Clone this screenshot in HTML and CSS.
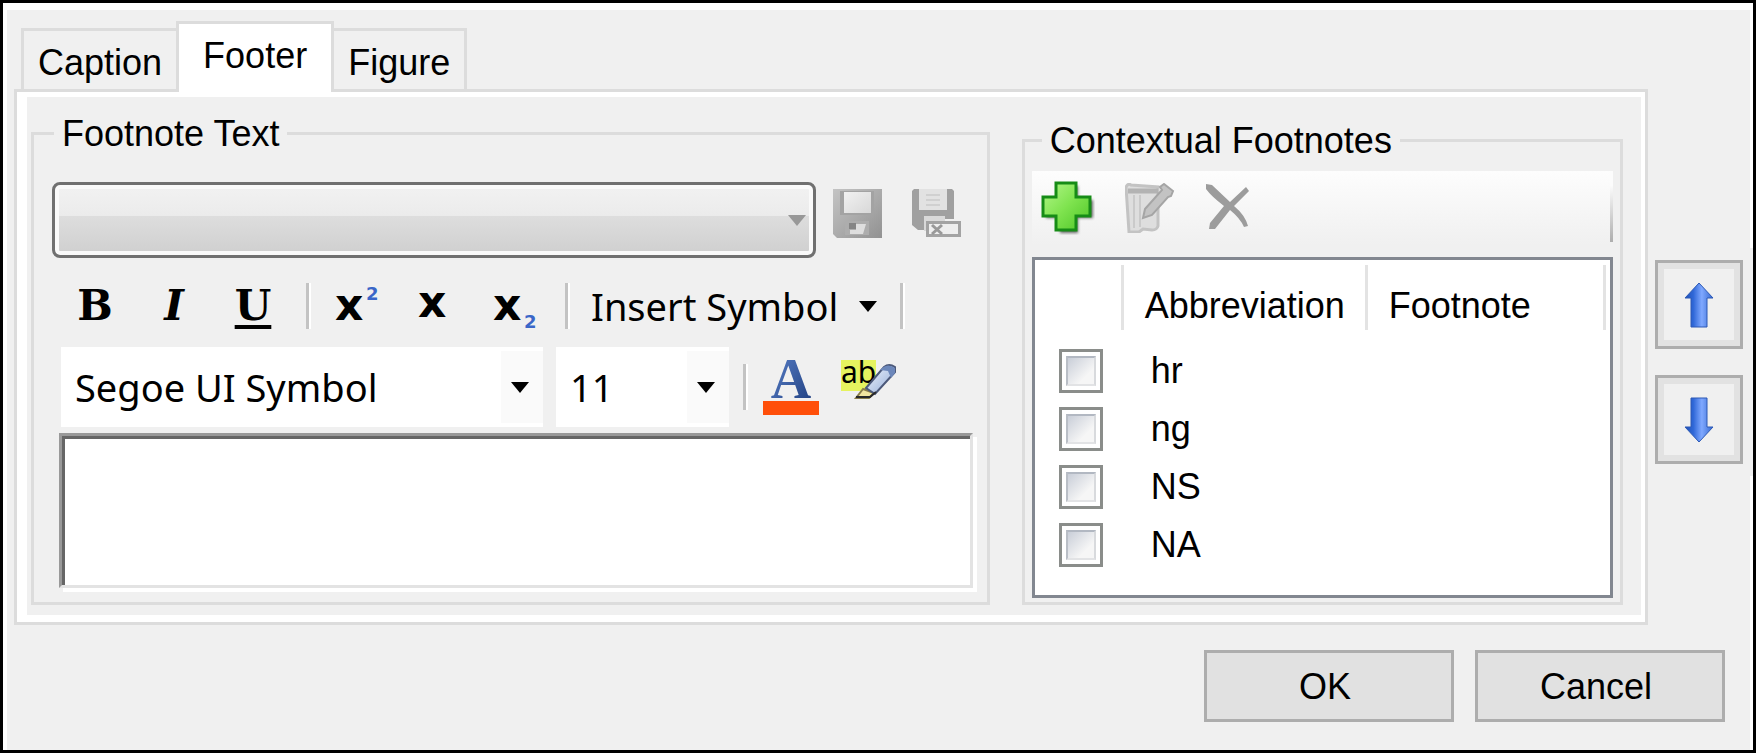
FILE: index.html
```html
<!DOCTYPE html>
<html lang="en">
<head>
<meta charset="utf-8">
<title>Footer</title>
<link rel="stylesheet" href="styles.css">
</head>
<body>
<form class="dialog">
  <div class="tabs" role="tablist">
    <button class="tab" type="button" role="tab" aria-selected="false">Caption</button>
    <button class="tab tab-active" type="button" role="tab" aria-selected="true">Footer</button>
    <button class="tab" type="button" role="tab" aria-selected="false">Figure</button>
  </div>
  <div class="main">
    <div class="panel" role="tabpanel">
      <div class="panel-body">
        <fieldset class="group group-text">
          <legend>Footnote Text</legend>
          <div class="preset-row">
            <div class="dropdown preset">
              <select disabled aria-label="Saved footnote"><option></option></select>
              <svg class="arrow arrow-muted" viewBox="0 0 18 11" aria-hidden="true"><path d="M0 0h18l-9 11z"/></svg>
            </div>
            <button class="icon-button" type="button" disabled aria-label="Save">
              <svg width="49" height="49" viewBox="0 0 49 49"><defs><linearGradient id="disk" x2="1" y2="1"><stop stop-color="#c4c4c4"/><stop offset="1" stop-color="#929292"/></linearGradient><linearGradient id="label" x2="1" y2="1"><stop stop-color="#f1f1f1"/><stop offset="1" stop-color="#d8d8d8"/></linearGradient></defs><path d="M0 0h49v49H4l-4-4z" fill="url(#disk)"/><path d="M7 2h34v24H7z" fill="#a3a3a3"/><path d="M11 3h27v21H11z" fill="url(#label)"/><path d="M12 32h24v14H12z" fill="#adadad"/><path d="M23 35h10l-3 10H17v-4h6z" fill="#dedede"/><path d="M16 34h7v6h-7z" fill="#858585"/></svg>
            </button>
            <button class="icon-button" type="button" disabled aria-label="Save as">
              <svg width="49" height="49" viewBox="0 0 49 49"><path d="M0 2l2-2h38l2 2v28H12v11H6l-6-5z" fill="#a0a0a0"/><path d="M7 0h28v21H7z" fill="#e2e2e2"/><path d="M14 6h14M14 11h14M14 16h14" stroke="#d0d0d0" stroke-width="2"/><path d="M12 27h21v6H17v9h-5z" fill="#d9d9d9"/><path d="M15.500 33.500h32v13h-32z" fill="#eee" stroke="#a3a3a3" stroke-width="3"/><path d="M20 36l10 9M30 36l-10 9" stroke="#999" stroke-width="3"/></svg>
            </button>
          </div>
          <div class="toolbar format-row">
            <button class="format" type="button" aria-label="Bold"><b>B</b></button>
            <button class="format" type="button" aria-label="Italic"><i>I</i></button>
            <button class="format" type="button" aria-label="Underline"><span class="underlined">U</span></button>
            <span class="separator"></span>
            <div class="scripts">
              <button type="button" aria-label="Superscript"><svg width="46" height="64" viewBox="0 0 46 64"><text class="glyph-x" x="0" y="46">x</text><text class="glyph-2" x="31" y="26">2</text></svg></button>
              <button type="button" aria-label="Normal script"><svg width="40" height="64" viewBox="0 0 40 64"><text class="glyph-x" x="1" y="43">x</text></svg></button>
              <button type="button" aria-label="Subscript"><svg width="46" height="64" viewBox="0 0 46 64"><text class="glyph-x" x="0" y="46">x</text><text class="glyph-2" x="31" y="54">2</text></svg></button>
            </div>
            <span class="separator"></span>
            <button class="insert" type="button">Insert Symbol <svg class="arrow" viewBox="0 0 18 11" aria-hidden="true"><path d="M0 0h18l-9 11z"/></svg></button>
            <span class="separator"></span>
          </div>
          <div class="toolbar font-row">
            <div class="dropdown flat font-name">
              <select aria-label="Font"><option>Segoe UI Symbol</option></select>
              <svg class="arrow" viewBox="0 0 18 11" aria-hidden="true"><path d="M0 0h18l-9 11z"/></svg>
            </div>
            <div class="dropdown flat font-size">
              <select aria-label="Font size"><option>11</option></select>
              <svg class="arrow" viewBox="0 0 18 11" aria-hidden="true"><path d="M0 0h18l-9 11z"/></svg>
            </div>
            <span class="separator"></span>
            <button class="icon-button" type="button" aria-label="Font color">
              <svg width="56" height="80" viewBox="0 -14 56 80"><defs><linearGradient id="ink" x2="1" y2="1"><stop stop-color="#5c83cc"/><stop offset="1" stop-color="#1d3c7c"/></linearGradient></defs><text class="glyph-a" x="28" y="37" text-anchor="middle" fill="url(#ink)">A</text><path d="M0 40h56v14H0z" fill="#ff4f0a"/></svg>
            </button>
            <button class="icon-button" type="button" aria-label="Highlight">
              <svg width="58" height="80" viewBox="0 -14 58 80"><defs><linearGradient id="pen" x2="1" y2="1"><stop stop-color="#f4f8ff"/><stop offset="1" stop-color="#8fa9d6"/></linearGradient></defs><path d="M0-1h35v31H0z" fill="#e6f35f"/><text class="glyph-ab" x="0" y="22">ab</text><path d="M22 28l-7 9h13l5-5z" fill="#f2e5a0" stroke="#8a7d4a" stroke-width="2"/><path d="M25 27L43 6q5-4 11 0v5L34 33z" fill="url(#pen)" stroke="#4c597a" stroke-width="2"/><path d="M41 7q6-5 13 0v5l-4 5-3-7-8-1z" fill="#6c87ba"/><path d="M15 36h14l6-5" fill="none" stroke="#292929" stroke-width="2"/></svg>
            </button>
          </div>
          <textarea class="editor" aria-label="Footnote text"></textarea>
        </fieldset>
        <fieldset class="group group-context">
          <legend>Contextual Footnotes</legend>
          <div class="list-tools">
            <button class="icon-button" type="button" aria-label="Add">
              <svg width="54" height="54" viewBox="0 0 54 54"><defs><linearGradient id="plus" x2="1" y2="1"><stop stop-color="#b4f78a"/><stop offset=".5" stop-color="#7fe34f"/><stop offset="1" stop-color="#4dc526"/></linearGradient><filter id="soft"><feGaussianBlur stdDeviation="1.500"/></filter></defs><path d="M19 5h18v14h15v18H37v15H19V37H5V19h14z" fill="#666" filter="url(#soft)"/><path d="M15 2h20v14h14v19H35v14H15V35H2V16h13z" fill="url(#plus)" stroke="#168c16" stroke-width="3"/></svg>
            </button>
            <button class="icon-button" type="button" disabled aria-label="Edit">
              <svg width="50" height="50" viewBox="0 0 50 50"><path d="M1 4q2-4 5-2l27 2v39q-1 4-6 4l-9-1-4 3H4z" fill="#dedede" stroke="#c3c3c3" stroke-width="3"/><path d="M3 8h30" stroke="#b3b3b3" stroke-width="5"/><path d="M9 12v33M15 12v32" stroke="#cacaca" stroke-width="2"/><path d="M20 26L37 7l-2-3 4-3 9 7-2 5-3 1-16 18-9 3z" fill="#c3c3c3" stroke="#a5a5a5" stroke-width="2"/></svg>
            </button>
            <button class="icon-button" type="button" disabled aria-label="Delete">
              <svg width="46" height="50" viewBox="0 0 46 50"><path d="M1 1l6 1 18 17L41 4l3 4-15 15q11 9 14 20l-4 1Q35 35 25 27L10 46H4l1-6 14-17Q6 13 1 6z" fill="#9c9c9c"/></svg>
            </button>
          </div>
          <div class="list">
            <table>
              <colgroup><col class="col-check"><col class="col-abbr"><col></colgroup>
              <thead><tr><th aria-label="Selected"></th><th>Abbreviation</th><th>Footnote</th></tr></thead>
              <tbody>
                <tr><td><input type="checkbox" id="hr"></td><td><label for="hr">hr</label></td><td></td></tr>
                <tr><td><input type="checkbox" id="ng"></td><td><label for="ng">ng</label></td><td></td></tr>
                <tr><td><input type="checkbox" id="ns"></td><td><label for="ns">NS</label></td><td></td></tr>
                <tr><td><input type="checkbox" id="na"></td><td><label for="na">NA</label></td><td></td></tr>
              </tbody>
            </table>
          </div>
        </fieldset>
      </div>
    </div>
    <div class="order">
      <button class="order-button" type="button" aria-label="Move up">
        <svg width="30" height="46" viewBox="0 0 30 46"><defs><linearGradient id="blue"><stop stop-color="#1f51b5"/><stop offset=".3" stop-color="#3068d8"/><stop offset=".6" stop-color="#7fa8ff"/><stop offset="1" stop-color="#3468d0"/></linearGradient></defs><path d="M15 1l14 15h-6v29H7V16H1z" fill="url(#blue)" stroke="#2c59b5"/></svg>
      </button>
      <button class="order-button" type="button" aria-label="Move down">
        <svg width="30" height="46" viewBox="0 0 30 46"><path d="M15 45l14-15h-6V1H7v29H1z" fill="url(#blue)" stroke="#2c59b5"/></svg>
      </button>
    </div>
  </div>
  <div class="actions">
    <button class="action" type="button">OK</button>
    <button class="action" type="button">Cancel</button>
  </div>
</form>
</body>
</html>
```
FILE: styles.css
```css
* {
  box-sizing: border-box;
}

body {
  margin: 0;
  color: #000;
  font-family: "Liberation Sans", sans-serif;
  font-size: 36px;
  line-height: 40px;
}

button,
select,
textarea {
  margin: 0;
  padding: 0;
  border: 0;
  border-radius: 0;
  background: none;
  color: inherit;
  font: inherit;
}

svg {
  display: block;
  flex: none;
}

.dialog {
  display: flex;
  flex-direction: column;
  min-height: 100vh;
  padding-top: 18px;
  border: 3px solid #000;
  background: #f0f0f0;
  box-shadow: inset 4px 0 #fff, inset -3px 0 #fff, inset 0 7px #fff;
}

/* Tabs */

.tabs {
  display: flex;
  align-items: flex-end;
  padding-left: 18px;
}

.tab {
  position: relative;
  height: 61px;
  padding: 6px 14px 0;
  border: 3px solid #dcdcdc;
  border-bottom: 0;
}

.tab-active {
  z-index: 1;
  height: 71px;
  margin: 0 -3px -3px;
  padding: 0 24px 4px;
  background: #fff;
}

.main {
  display: flex;
  flex: 1;
}

.panel {
  display: flex;
  flex: 1;
  min-width: 0;
  margin-left: 11px;
  padding: 5px 4px 7px 10px;
  border: 3px solid #dcdcdc;
  background: #fff;
}

.panel-body {
  display: flex;
  flex: 1;
  gap: 32px;
  min-width: 0;
  padding: 16px 18px 10px 4px;
  background: #f0f0f0;
}

.group {
  display: flex;
  flex-direction: column;
  min-width: 0;
  margin: 0;
  border: 3px solid #dcdcdc;
}

.group legend {
  height: 40px;
  padding: 1px 8px 0;
}

.group-text {
  flex: 955 1 0;
  padding: 29px 14px 14px 18px;
}

.group-text legend {
  margin-left: 2px;
}

.group-context {
  flex: 603 1 0;
  margin-top: 7px;
  padding: 11px 7px 4px;
}

.group-context legend {
  margin-left: 10px;
}

/* Dropdowns */

.dropdown {
  display: grid;
  align-items: center;
}

.dropdown > * {
  grid-area: 1 / 1;
}

.dropdown select {
  width: 100%;
  height: 100%;
  line-height: 60px;
  appearance: none;
  opacity: 1;
}

.arrow {
  width: 18px;
  height: 11px;
  fill: #000;
}

.dropdown .arrow {
  justify-self: end;
  margin-right: 14px;
  pointer-events: none;
}

.dropdown .arrow-muted {
  margin-right: 10px;
  fill: #989898;
}

.preset-row {
  display: flex;
  align-items: center;
}

.preset-row .icon-button {
  margin-left: 17px;
  padding-bottom: 14px;
}

.preset-row .icon-button + .icon-button {
  margin: 0 12px 0 30px;
}

.preset {
  flex: 1;
  height: 76px;
}

.preset select {
  border: 3px solid #707070;
  border-radius: 8px;
  background: linear-gradient(#f2f2f2, #ebebeb 45%, #dddddd 45%, #cfcfcf);
  box-shadow: inset 0 0 0 4px #fafafa;
}

/* Formatting toolbars */

.toolbar {
  display: flex;
  align-items: center;
  font-family: "Noto Sans", "Open Sans", sans-serif;
  font-size: 38px;
}

.separator {
  width: 5px;
  height: 46px;
  border-left: 3px solid #c3c3c3;
  border-right: 2px solid #fff;
}

.format-row {
  height: 76px;
  margin: 10px 0 3px;
  padding-left: 20px;
}

.format {
  display: grid;
  place-items: center;
  width: 46px;
  margin-right: 33px;
  font-family: "DejaVu Serif", serif;
  font-size: 42px;
  font-weight: bold;
}

.format:nth-child(3) {
  margin-right: 30px;
}

.underlined {
  text-decoration: underline 4px;
  text-underline-offset: 5px;
}

.scripts {
  display: flex;
  gap: 36px;
  margin: 0 26px 0 24px;
}

.glyph-x {
  font: bold 44px "DejaVu Sans", sans-serif;
}

.glyph-2 {
  fill: #3a66c8;
  font: bold 18px "DejaVu Sans", sans-serif;
}

.glyph-a {
  font: bold 56px "Liberation Serif", serif;
}

.glyph-ab {
  font: 30px "Noto Sans", sans-serif;
}

.insert {
  display: flex;
  align-items: center;
  gap: 21px;
  margin: 0 23px 0 21px;
}

.font-row {
  padding-left: 9px;
}

.flat {
  height: 80px;
  background: linear-gradient(#fafafa, #fafafa) right / 42px 72px no-repeat #fff;
}

.flat select {
  padding-left: 14px;
}

.font-name {
  width: 482px;
}

.font-size {
  width: 173px;
  margin: 0 14px 0 13px;
}

.font-row .icon-button {
  margin-left: 15px;
}

.font-row .icon-button + .icon-button {
  margin-left: 22px;
}

.editor {
  flex: 1;
  height: 0;
  min-height: 80px;
  margin: 6px 0 0 7px;
  border: 3px solid #e3e3e3;
  border-top-color: #999;
  border-left-color: #999;
  background: #fff;
  box-shadow: 4px 4px #fff, inset 3px 3px #666;
  resize: none;
}

/* Contextual footnotes */

.list-tools {
  display: flex;
  align-items: center;
  gap: 30px;
  height: 74px;
  margin-bottom: 12px;
  padding: 0 9px;
  border-right: 3px solid;
  border-image: linear-gradient(#fcfcfc 20%, #adadad 95%, #f0f0f0 95%) 1;
  background: linear-gradient(#fdfdfd, #f0f0f0);
}

.list {
  flex: 1;
  padding-right: 4px;
  border: 3px solid #828790;
  background: #fff;
}

table {
  width: 100%;
  border-collapse: collapse;
  table-layout: fixed;
}

.col-check {
  width: 89px;
}

.col-abbr {
  width: 244px;
}

th {
  height: 82px;
  padding: 10px 0 0 21px;
  background: linear-gradient(#e3e3e3, #e3e3e3) right 5px / 3px 65px no-repeat;
  font-weight: normal;
  text-align: left;
}

td {
  height: 58px;
  padding: 0 0 0 27px;
}

td:first-child {
  padding-left: 24px;
}

input[type="checkbox"] {
  display: grid;
  width: 44px;
  height: 44px;
  margin: 0;
  padding: 4px;
  border: 3px solid #8a8d8a;
  background: #fff;
  appearance: none;
}

input[type="checkbox"]::before {
  content: "";
  border: 2px solid;
  border-color: #b2b8c2 #d8dadd #e2e3e5 #b9bec6;
  background: linear-gradient(135deg, #c9ced8, #f6f6f6 70%);
}

/* Reordering and dialog buttons */

.order {
  display: flex;
  flex-direction: column;
  align-self: flex-start;
  gap: 26px;
  margin-top: 159px;
  padding: 12px 10px 12px 7px;
  background: #f0f0f0;
}

.order-button {
  display: grid;
  place-items: center;
  width: 88px;
  height: 89px;
  border: 3px solid #adadad;
  box-shadow: inset 0 0 0 6px #e2e2e2;
}

.actions {
  display: flex;
  justify-content: flex-end;
  gap: 21px;
  padding: 25px 28px 28px;
}

.action {
  width: 250px;
  height: 72px;
  padding: 2px 8px 0 0;
  border: 3px solid #adadad;
  background: #e1e1e1;
}
```
